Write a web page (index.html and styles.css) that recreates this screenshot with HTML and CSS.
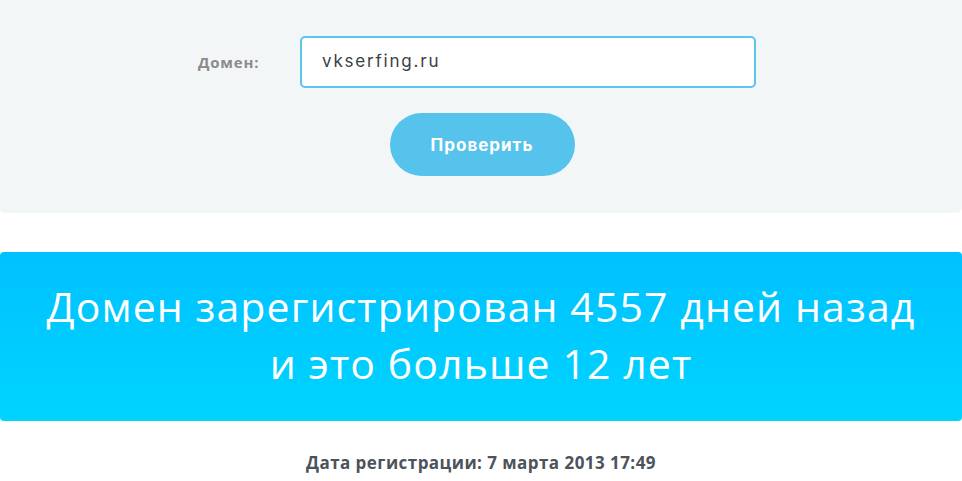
FILE: index.html
```html
<!DOCTYPE html>
<html lang="ru">
<head>
    <meta charset="UTF-8">
    <title>Проверка возраста домена</title>
    <link rel="stylesheet" href="styles.css">
</head>
<body>
<div class="check">
    <form class="check-form">
        <div class="row">
            <label class="lbl" for="domain">Домен:</label>
            <input class="inp" id="domain" type="text" value="vkserfing.ru">
        </div>
        <button class="btn" type="button">Проверить</button>
    </form>
</div>

<div class="result">
    <p>Домен зарегистрирован 4557 дней назад<br>и это больше 12 лет</p>
</div>

<p class="date">Дата регистрации: 7 марта 2013 17:49</p>
</body>
</html>
```

FILE: styles.css
```css
/*reset*/
body{margin:0;font-family:"Open Sans","Noto Sans",sans-serif;background:#fff;}
p{margin:0;}

/*форма проверки*/
.check{
    height:213px;
    background-color:#f3f6f7;
    border-radius:0 0 5px 5px;
    padding-top:36px;
    box-sizing:border-box;
}
.check-form{display:flex;flex-direction:column;align-items:center;}
.row{display:flex;align-items:center;margin-left:-8px;}
.lbl{
    width:102px;
    font-size:15px;
    font-weight:700;
    color:#8b8b8b;
    letter-spacing:.8px;
}
.inp{
    width:456px;
    height:52px;
    box-sizing:border-box;
    border:2px solid #5bc6ed;
    border-radius:5px;
    padding:0 20px 2px;
    font-family:"Inter","Open Sans",sans-serif;
    font-size:17px;
    letter-spacing:1.8px;
    color:#3a3f45;
    outline:none;
}
.btn{
    margin-top:25px;
    margin-left:2px;
    width:185px;
    height:63px;
    border:0;
    border-radius:32px;
    background-color:#55c3ec;
    color:#fff;
    font-family:"Inter","Open Sans",sans-serif;
    font-size:17px;
    font-weight:700;
    letter-spacing:1px;
}

/*результат*/
.result{
    margin-top:39px;
    height:169px;
    border-radius:4px;
    background:linear-gradient(#00c1ff,#00d4ff);
    display:flex;
    align-items:center;
    justify-content:center;
}
.result p{
    color:#fff;
    text-align:center;
    font-size:41px;
    line-height:57px;
    letter-spacing:1.1px;
    padding-bottom:4px;
}

.date{
    margin-top:30px;
    text-align:center;
    font-size:17px;
    font-weight:700;
    letter-spacing:.45px;
    color:#4c535b;
}
```
